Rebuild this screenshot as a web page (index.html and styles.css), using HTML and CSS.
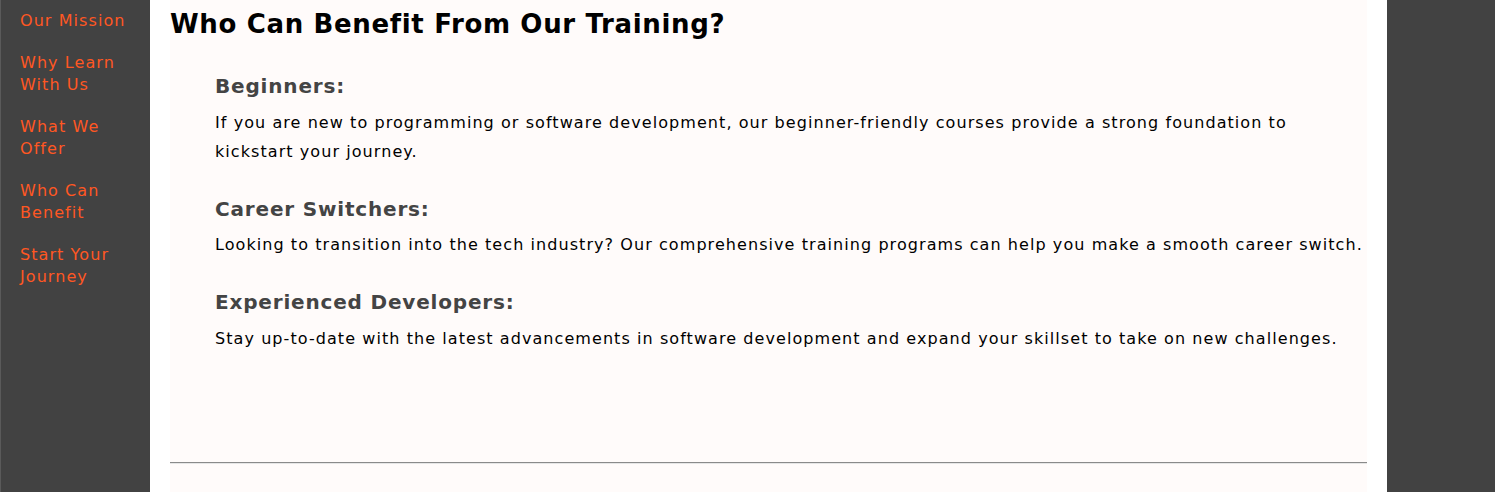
FILE: index.html
```html
<!DOCTYPE html>
<html lang="en">
<head>
<meta charset="utf-8">
<title>Who Can Benefit</title>
<link rel="stylesheet" href="styles.css">
</head>
<body>
<div class="layout">
  <nav class="sidebar">
    <a href="#mission">Our Mission</a>
    <a href="#why">Why Learn With Us</a>
    <a href="#offer">What We Offer</a>
    <a href="#benefit">Who Can Benefit</a>
    <a href="#start">Start Your Journey</a>
  </nav>
  <main class="main">
    <section class="panel" id="benefit">
      <h1 class="title">Who Can Benefit From Our Training?</h1>
      <div class="groups">
        <div class="group">
          <h3 class="group-title">Beginners:</h3>
          <p class="group-text">If you are new to programming or software development, our beginner-friendly courses provide a strong foundation to kickstart your journey.</p>
        </div>
        <div class="group">
          <h3 class="group-title">Career Switchers:</h3>
          <p class="group-text">Looking to transition into the tech industry? Our comprehensive training programs can help you make a smooth career switch.</p>
        </div>
        <div class="group">
          <h3 class="group-title">Experienced Developers:</h3>
          <p class="group-text">Stay up-to-date with the latest advancements in software development and expand your skillset to take on new challenges.</p>
        </div>
      </div>
      <hr class="divider">
    </section>
  </main>
  <div class="aside"></div>
</div>
</body>
</html>
```

FILE: styles.css
```css
html, body {
  margin: 0;
  padding: 0;
  height: 100%;
}
body {
  background: #424242;
  font-family: "DejaVu Sans", Verdana, sans-serif;
  overflow: hidden;
}
.layout {
  display: grid;
  grid-template-columns: 150px 1237px 1fr;
  min-height: 100vh;
}
.sidebar {
  background: #424242;
  border-left: 1px solid #5a5a5a;
  display: flex;
  flex-direction: column;
  gap: 20px;
  padding: 10px 20px 0 19px;
}
.sidebar a {
  color: #ff5722;
  text-decoration: none;
  font-size: 16px;
  line-height: 22px;
  letter-spacing: 1.07px;
}
.main {
  background: #ffffff;
  padding: 0 20px;
}
.panel {
  background: #fffbfa;
  min-height: 100%;
  padding-top: 6px;
  overflow: hidden;
}
.title {
  margin: 0;
  font-size: 26px;
  line-height: 36px;
  color: #000;
  font-weight: bold;
  letter-spacing: 0.66px;
}
.groups {
  padding: 30px 0 0 45px;
  display: flex;
  flex-direction: column;
  gap: 29px;
}
.group-title {
  margin: 0 0 7.5px;
  font-size: 20px;
  line-height: 28px;
  color: #444444;
  font-weight: bold;
  letter-spacing: 0.82px;
}
.group-text {
  margin: 0;
  font-size: 16px;
  line-height: 29px;
  color: #000;
  letter-spacing: 1.07px;
}
.divider {
  margin: 109.5px 0 0;
  border: 0;
  border-top: 1px solid #8a8a8a;
  border-bottom: 1px solid #e6e6e6;
  height: 0;
}
```
